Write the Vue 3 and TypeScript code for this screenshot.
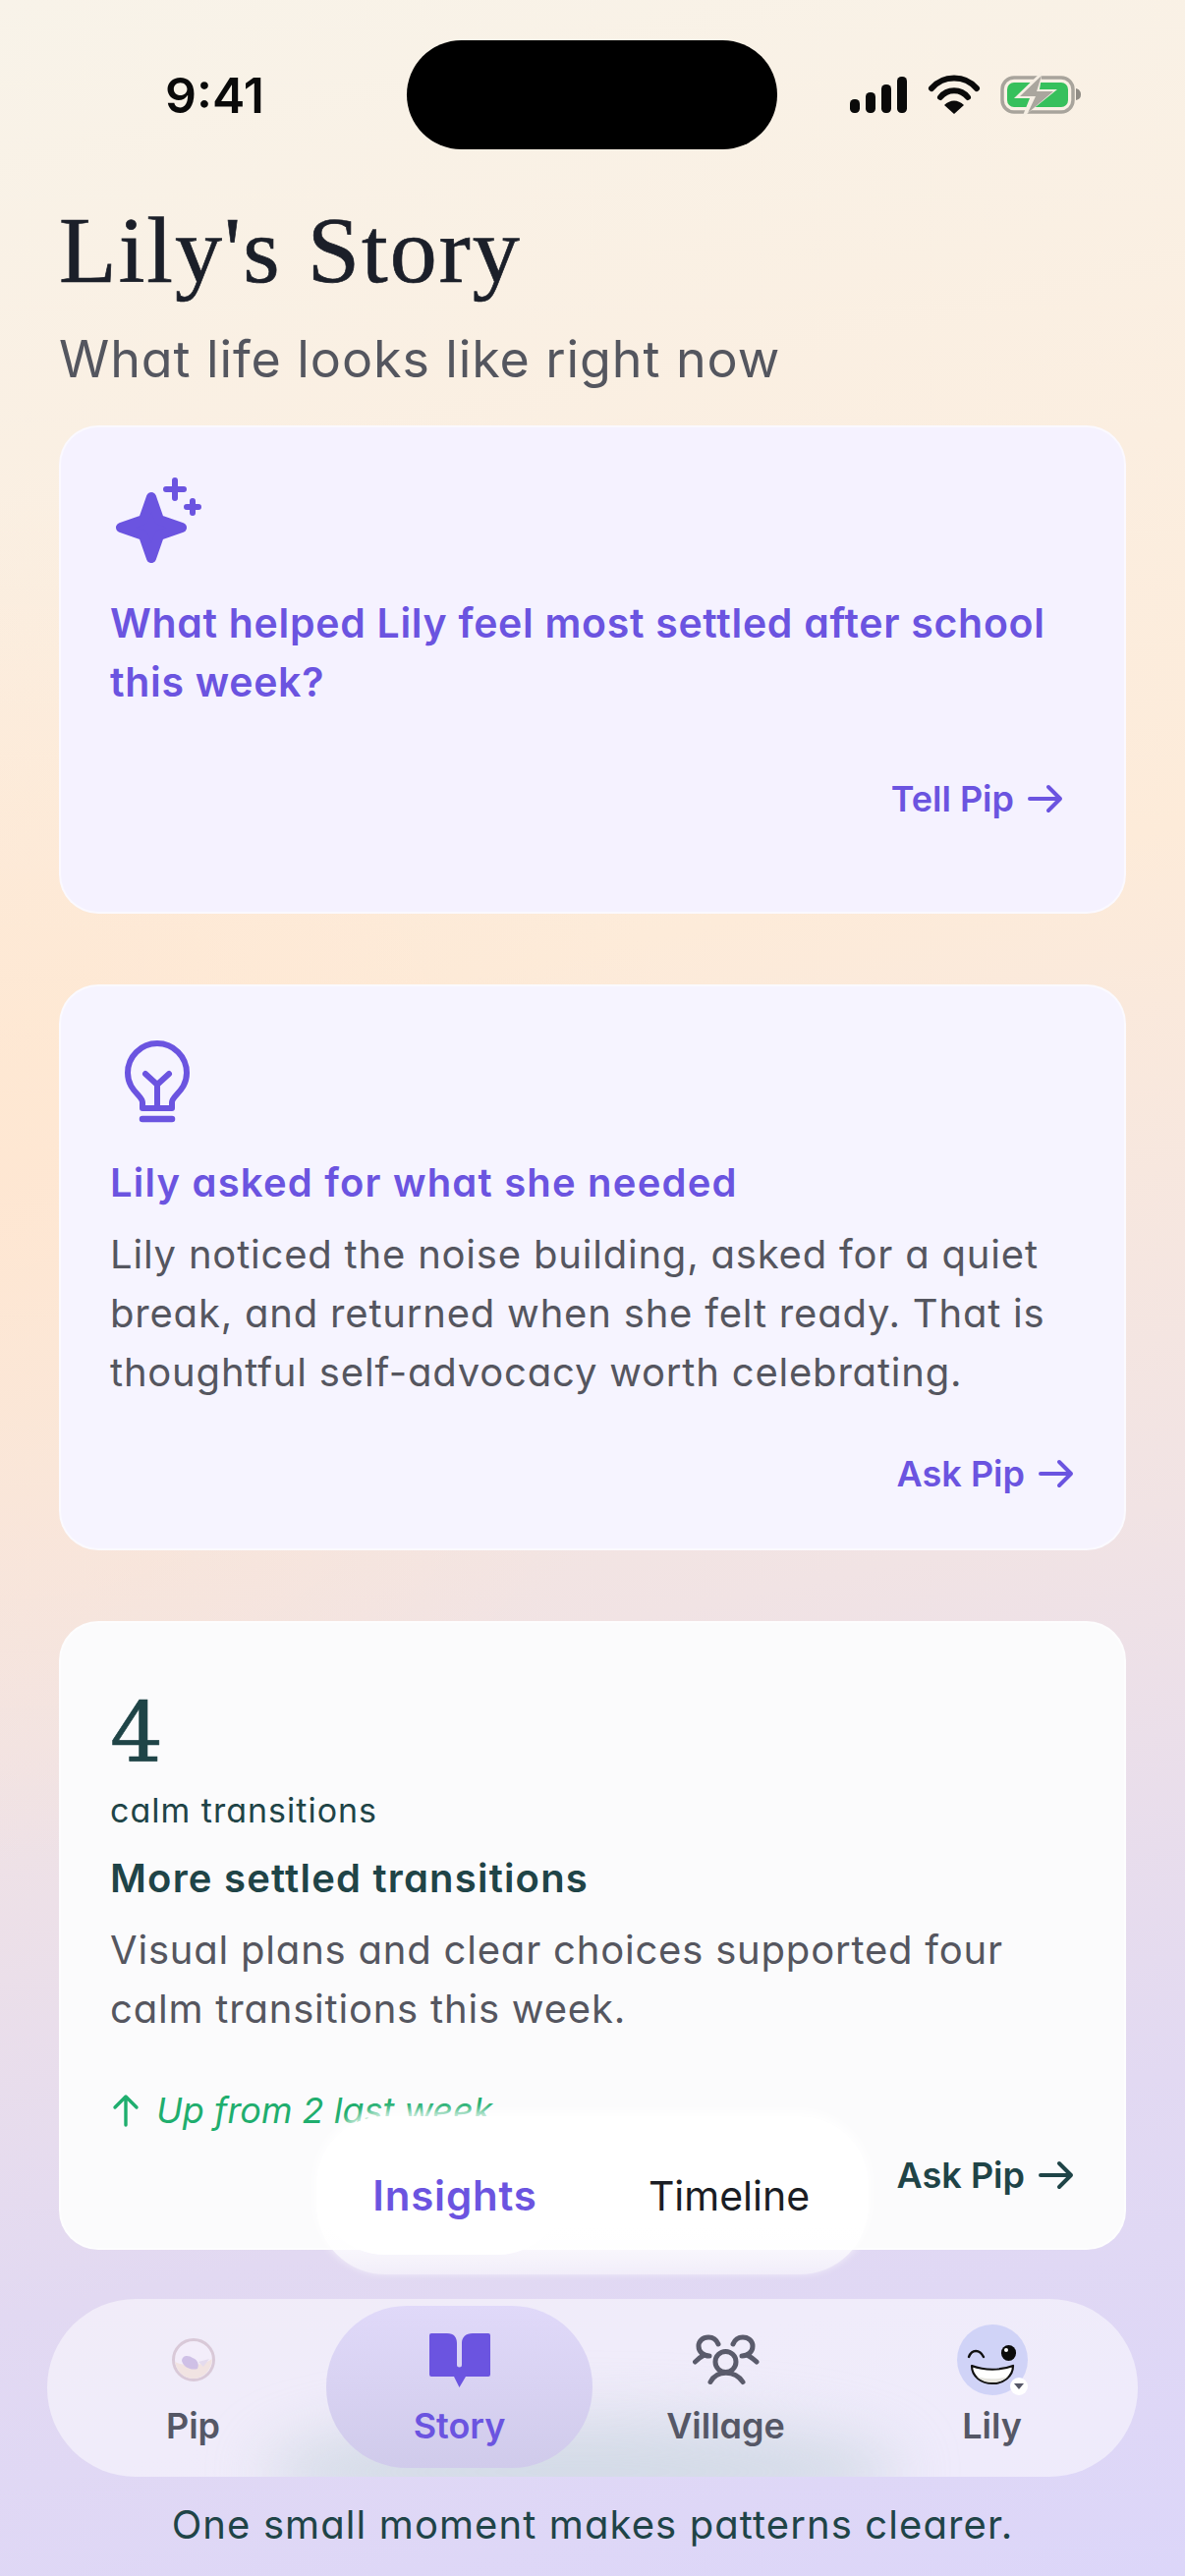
<script setup lang="ts">
const navItems = ['Pip', 'Story', 'Village', 'Lily']
</script>

<template>
  <div class="page">
    <header class="status">
      <span class="time">9:41</span>
      <div class="island"></div>
      <svg class="status-icons" width="240" height="50" viewBox="0 0 240 50">
        <!-- origin is 865,74 on the page -->
        <rect x="0" y="28" width="10" height="14" rx="4.5" fill="#0a0a0a" />
        <rect x="16" y="21" width="10" height="21" rx="4.5" fill="#0a0a0a" />
        <rect x="32" y="13" width="10" height="29" rx="4.5" fill="#0a0a0a" />
        <rect x="48" y="5" width="10" height="37" rx="4.5" fill="#0a0a0a" />
        <path d="M83 17 C95 3 117 3 129 17" fill="none" stroke="#0a0a0a" stroke-width="6" stroke-linecap="round" />
        <path d="M92 26 C99 17 113 17 120 26" fill="none" stroke="#0a0a0a" stroke-width="6" stroke-linecap="round" />
        <path d="M96 34 C102 28 110 28 116 34 L106 43 Z" fill="#0a0a0a" />
        <rect x="155" y="6" width="72" height="35" rx="12" fill="none" stroke="#a8a49c" stroke-width="3.5" />
        <path d="M230 17 C234 18 235 21 235 23 C235 26 234 28 230 29 Z" fill="#8f8b84" />
        <rect x="160" y="11" width="62" height="25" rx="7" fill="#37c05c" />
        <path d="M196 -1 L167 27 H183 L175 47 L211 18 H193 Z" fill="#f6efe4" />
        <path d="M195 4 L173 25 H189 L181 42 L207 20 H190 Z" fill="#aaa69e" />
      </svg>
    </header>

    <h1 class="title">Lily's Story</h1>
    <p class="subtitle">What life looks like right now</p>

    <main class="cards">
      <section class="card card-prompt">
        <svg class="card-icon" width="96" height="96" viewBox="0 0 96 96">
          <path d="M42 25 L50 48 L73 56 L50 64 L42 87 L34 64 L11 56 L34 48 Z" fill="#6b54e0" stroke="#6b54e0" stroke-width="10" stroke-linejoin="round" />
          <path d="M66 8 V26 M57 17 H75" stroke="#6b54e0" stroke-width="6" stroke-linecap="round" />
          <path d="M84 29 V41 M78 35 H90" stroke="#6b54e0" stroke-width="6" stroke-linecap="round" />
        </svg>
        <h2 class="prompt-text">What helped Lily feel most settled after school this week?</h2>
        <a class="link link-tell">
          Tell Pip
          <svg width="36" height="36" viewBox="0 0 36 36"><path d="M2 18 H33 M21 6 L33 18 L21 30" fill="none" stroke="currentColor" stroke-width="4" stroke-linecap="round" stroke-linejoin="round" /></svg>
        </a>
      </section>

      <section class="card card-insight">
        <svg class="card-icon" width="96" height="96" viewBox="0 0 96 96">
          <g fill="none" stroke="#6b54e0" stroke-width="6" stroke-linecap="round" stroke-linejoin="round">
            <path d="M33 78 V72 C33 65 18 60 18 42 A30 30 0 0 1 78 42 C78 60 63 65 63 72 V78 Z" />
            <path d="M48 78 V54 M36 43 L48 54 L60 43" />
            <path d="M33 89 H63" stroke-width="6.5" />
          </g>
        </svg>
        <h2 class="heading purple">Lily asked for what she needed</h2>
        <p class="body">Lily noticed the noise building, asked for a quiet break, and returned when she felt ready. That is thoughtful self-advocacy worth celebrating.</p>
        <a class="link link-insight">
          Ask Pip
          <svg width="36" height="36" viewBox="0 0 36 36"><path d="M2 18 H33 M21 6 L33 18 L21 30" fill="none" stroke="currentColor" stroke-width="4" stroke-linecap="round" stroke-linejoin="round" /></svg>
        </a>
      </section>

      <section class="card card-stat">
        <div class="stat-number">4</div>
        <div class="stat-label">calm transitions</div>
        <h2 class="heading teal">More settled transitions</h2>
        <p class="body">Visual plans and clear choices supported four calm transitions this week.</p>
        <div class="trend">
          <svg width="28" height="36" viewBox="0 0 28 36"><path d="M14 33 V4 M3 15 L14 4 L25 15" fill="none" stroke="currentColor" stroke-width="3.4" stroke-linecap="round" stroke-linejoin="round" /></svg>
          <span>Up from 2 last week</span>
        </div>
        <a class="link link-stat">
          Ask Pip
          <svg width="36" height="36" viewBox="0 0 36 36"><path d="M2 18 H33 M21 6 L33 18 L21 30" fill="none" stroke="currentColor" stroke-width="4" stroke-linecap="round" stroke-linejoin="round" /></svg>
        </a>
      </section>
    </main>

    <footer class="bottom">
      <div class="tabs">
        <span class="tab tab-active">Insights</span>
        <span class="tab tab-plain">Timeline</span>
      </div>

      <nav class="nav">
        <div class="nav-glow"></div>
        <div v-for="item in navItems" :key="item" class="nav-item" :class="{ active: item === 'Story' }">
          <div class="nav-icon">
            <svg v-if="item === 'Pip'" width="46" height="46" viewBox="0 0 46 46">
              <circle cx="23" cy="23" r="20.5" fill="#f3edfa" stroke="#d9c9d8" stroke-width="3" />
              <path d="M4 25 C14 30 30 30 42 22 C41 34 33 42 23 42 C13 42 6 35 4 25 Z" fill="#f1e3e2" />
              <path d="M11 24 C12 17 19 19 22 21 C27 23 29 27 27 32 C21 34 13 31 11 24 Z" fill="#cfc0e6" />
              <path d="M28 25 L39 22 L33 30 Z" fill="#e4dbee" />
            </svg>
            <svg v-else-if="item === 'Story'" width="62" height="55" viewBox="0 0 62 55">
              <path d="M2 0 H18 C25 0 28 4 28 10 V32 A2.5 2.5 0 0 0 33 32 V10 C33 4 37 0 44 0 H60 A2 2 0 0 1 62 2 V42 A2 2 0 0 1 60 44 H37 L30.5 55 L25 44 H2 A2 2 0 0 1 0 42 V2 A2 2 0 0 1 2 0 Z" fill="#6b54e0" />
            </svg>
            <svg v-else-if="item === 'Village'" width="68" height="52" viewBox="0 0 68 52">
              <g fill="none" stroke="#5a5b6b" stroke-width="5" stroke-linecap="round">
                <circle cx="33.5" cy="28" r="10.5" />
                <path d="M18 48.5 C24 36 43 36 51 48.5" />
                <path d="M26 10 C24 5 20 3 16 3 C10 3 6 7 6 12 C6 18 11 22 17 22" />
                <path d="M2.5 28 C5 25 8 23 11 21.5" />
                <path d="M41 10 C43 5 47 3 51 3 C57 3 61 7 61 12 C61 18 56 22 50 22" />
                <path d="M65 28 C62 25 59 23 56 21.5" />
              </g>
            </svg>
            <div v-else class="avatar">
              <svg width="72" height="72" viewBox="0 0 72 72">
                <circle cx="36" cy="36" r="36" fill="#d0d3f7" />
                <path d="M12 33 C15 25 23 25 27 33" fill="none" stroke="#111" stroke-width="2.4" stroke-linecap="round" />
                <rect x="45" y="21" width="15" height="16" rx="7.5" fill="#0b0b0b" />
                <circle cx="50" cy="26" r="2" fill="#fff" />
                <path d="M15 42 C28 47 44 47 57 42 C57 53 47 60 36 60 C25 60 15 53 15 42 Z" fill="#fff" stroke="#111" stroke-width="2.2" stroke-linejoin="round" />
                <path d="M20 53 C30 56 42 56 52 53 C47 58 41 59 36 59 C31 59 25 58 20 53 Z" fill="#e6e5df" />
              </svg>
              <span class="avatar-badge">
                <svg width="10" height="6" viewBox="0 0 10 6"><path d="M0 0 H10 L5 6 Z" fill="#555766" /></svg>
              </span>
            </div>
          </div>
          <span class="nav-label">{{ item }}</span>
        </div>
      </nav>

      <p class="nudge">One small moment makes patterns clearer.</p>
    </footer>
  </div>
</template>

<style scoped>
.page {
  position: relative;
  width: 1206px;
  height: 2622px;
  overflow: hidden;
  padding: 0 60px;
  box-sizing: border-box;
  font-family: Inter, "Noto Sans", sans-serif;
  font-feature-settings: "cv11";
  background:
    radial-gradient(700px 700px at 0% 46%, rgba(255, 230, 208, 0.8), rgba(255, 230, 208, 0)),
    linear-gradient(168deg, #f8f3e9 0%, #fbeee0 24%, #fdebd9 38%, #f1e3e4 62%, #e2d9f2 82%, #dcd6f9 100%);
}

.status {
  display: flex;
  align-items: center;
  height: 111px;
  padding-top: 41px;
  margin: 0 -60px;
}

.time {
  width: 414px;
  padding-left: 168px;
  box-sizing: border-box;
  font-size: 50px;
  font-weight: 600;
  font-feature-settings: normal;
  color: #0a0a0a;
}

.island {
  width: 377px;
  height: 111px;
  border-radius: 56px;
  background: #000;
}

.status-icons {
  margin-left: 74px;
  margin-top: 2px;
}

.title {
  margin: 48px 0 0;
  font-family: "Liberation Serif", serif;
  font-size: 96px;
  line-height: 110px;
  font-weight: 400;
  letter-spacing: 2px;
  -webkit-text-stroke: 0.7px #1b1f29;
  color: #1b1f29;
}

.subtitle {
  margin: 24px 0 0;
  font-size: 52px;
  line-height: 64px;
  letter-spacing: 0.9px;
  color: #54565f;
}

.cards {
  display: flex;
  flex-direction: column;
  gap: 72px;
  margin-top: 35px;
}

.card {
  box-sizing: border-box;
  padding: 46px 50px 0;
  border: 2px solid rgba(255, 255, 255, 0.55);
  border-radius: 40px;
  background: #f5f2ff;
}

.card-prompt {
  height: 497px;
}

.card-insight {
  height: 576px;
  background: #f6f4ff;
}

.card-stat {
  height: 640px;
  padding-top: 64px;
  background: #fbfbfc;
}

.card-icon {
  display: block;
}

.prompt-text {
  margin: 27px 0 0;
  font-size: 41px;
  line-height: 60px;
  font-weight: 600;
  letter-spacing: 0.7px;
  color: #6b54e0;
}

.heading {
  margin: 28px 0 0;
  font-size: 40px;
  line-height: 60px;
  font-weight: 600;
  letter-spacing: 1.2px;
}

.purple {
  color: #6b54e0;
}

.teal {
  margin-top: 17px;
  color: #1f4447;
}

.body {
  margin: 13px 0 0;
  font-size: 40px;
  line-height: 60px;
  letter-spacing: 0.8px;
  color: #55565f;
}

.link {
  display: flex;
  justify-content: flex-end;
  align-items: center;
  gap: 14px;
  margin-top: 28px;
  padding-right: 1px;
  font-size: 36px;
  line-height: 48px;
  font-weight: 600;
  color: #6b54e0;
}

.link-tell {
  margin-top: 65px;
  padding-right: 12px;
}

.link-insight {
  margin-top: 49px;
}

.link-stat {
  margin-top: 18px;
  color: #1f4447;
}

.stat-number {
  font-family: "DejaVu Serif", serif;
  font-size: 85px;
  line-height: 96px;
  -webkit-text-stroke: 0.6px #1f4447;
  color: #1f4447;
}

.stat-label {
  margin-top: 9px;
  font-size: 34px;
  line-height: 44px;
  letter-spacing: 1px;
  color: #1f4447;
}

.trend {
  display: flex;
  align-items: center;
  gap: 17px;
  margin-top: 49px;
  padding-left: 2px;
  font-size: 36px;
  line-height: 48px;
  font-style: italic;
  color: #1fae6e;
}

.bottom {
  position: absolute;
  left: 0;
  right: 0;
  top: 2154px;
  display: flex;
  flex-direction: column;
  align-items: center;
}

.tabs {
  position: relative;
  display: flex;
  width: 562px;
  height: 161px;
  border-radius: 70px;
  background: linear-gradient(180deg, #fff 70%, rgba(255, 255, 255, 0.55) 100%);
  box-shadow: 0 -4px 10px 2px rgba(255, 255, 255, 0.8);
}

.tab {
  display: flex;
  justify-content: center;
  align-items: center;
  box-sizing: border-box;
  height: 161px;
  padding-bottom: 0;
  font-size: 41px;
  color: #1a1d24;
}

.tab-active {
  flex: 0 0 254px;
  height: 141px;
  padding-top: 20px;
  padding-left: 28px;
  border-radius: 70px;
  font-size: 42px;
  font-weight: 600;
  letter-spacing: 0.8px;
  color: #6b54e0;
  background: #fff;
}

.tab-plain {
  flex: 1;
  height: 141px;
  padding-top: 20px;
  padding-left: 24px;
}

.nav {
  position: relative;
  display: flex;
  width: 1110px;
  height: 181px;
  margin-top: 25px;
  padding: 7px 13px 0;
  box-sizing: border-box;
  overflow: hidden;
  border-radius: 90px;
  background: rgba(255, 255, 255, 0.5);
}

.nav-glow {
  position: absolute;
  left: 220px;
  right: 240px;
  bottom: -50px;
  height: 110px;
  border-radius: 50%;
  background: rgba(190, 205, 215, 0.55);
  filter: blur(30px);
}

.nav-item {
  position: relative;
  display: flex;
  flex-direction: column;
  align-items: center;
  width: 271px;
  height: 165px;
  border-radius: 82px;
}

.nav-item.active {
  background: linear-gradient(180deg, #e0d9f9, #d0cbeb);
}

.nav-icon {
  display: flex;
  justify-content: center;
  align-items: center;
  height: 74px;
  margin-top: 18px;
}

.nav-label {
  margin-top: 8px;
  font-size: 36px;
  line-height: 44px;
  font-weight: 600;
  color: #555766;
}

.active .nav-label {
  color: #6b54e0;
}

.avatar {
  position: relative;
  width: 72px;
  height: 72px;
}

.avatar svg {
  display: block;
}

.avatar-badge {
  position: absolute;
  right: 0;
  bottom: 0;
  display: flex;
  justify-content: center;
  align-items: center;
  width: 18px;
  height: 18px;
  border-radius: 50%;
  background: #fff;
}

.nudge {
  margin: 23px 0 0;
  font-size: 40px;
  line-height: 52px;
  letter-spacing: 1.1px;
  color: #1f4447;
}
</style>

<style>
html,
body {
  margin: 0;
}
</style>
